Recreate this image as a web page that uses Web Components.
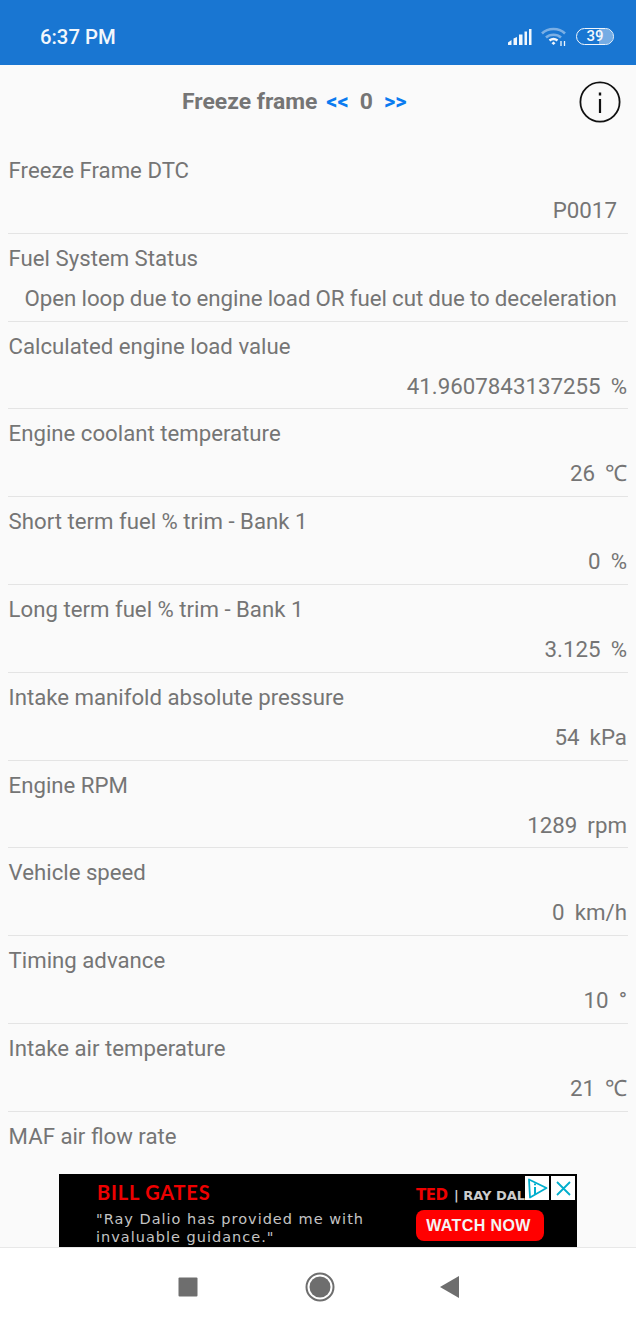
<!DOCTYPE html>
<html>
<head>
<meta charset="utf-8">
<title>Freeze frame</title>
<style>
  html, body { margin: 0; padding: 0; }
  body {
    width: 636px;
    height: 1324px;
    overflow: hidden;
    display: flex;
    flex-direction: column;
    background: #fafafa;
    font-family: Roboto, "Liberation Sans", sans-serif;
  }
  pid-list { flex: 1; min-height: 0; }
</style>
</head>
<body>
<status-bar></status-bar>
<freeze-header></freeze-header>
<pid-list>
  <pid-row label="Freeze Frame DTC" value="P0017  "></pid-row>
  <pid-row label="Fuel System Status" value="Open loop due to engine load OR fuel cut due to deceleration  "></pid-row>
  <pid-row label="Calculated engine load value" value="41.9607843137255  %"></pid-row>
  <pid-row label="Engine coolant temperature" value="26  ℃"></pid-row>
  <pid-row label="Short term fuel % trim - Bank 1" value="0  %"></pid-row>
  <pid-row label="Long term fuel % trim - Bank 1" value="3.125  %"></pid-row>
  <pid-row label="Intake manifold absolute pressure" value="54  kPa"></pid-row>
  <pid-row label="Engine RPM" value="1289  rpm"></pid-row>
  <pid-row label="Vehicle speed" value="0  km/h"></pid-row>
  <pid-row label="Timing advance" value="10  °"></pid-row>
  <pid-row label="Intake air temperature" value="21  ℃"></pid-row>
  <pid-row label="MAF air flow rate" value=""></pid-row>
</pid-list>
<ad-banner></ad-banner>
<nav-bar></nav-bar>

<script>
class StatusBar extends HTMLElement {
    constructor() {
        super();
        this.attachShadow({ mode: 'open' });
        this.shadowRoot.innerHTML = `
            <style>
                :host {
                    display: flex;
                    flex: none;
                    align-items: center;
                    height: 65px;
                    padding: 8px 22px 0 40px;
                    box-sizing: border-box;
                    background: #1976d2;
                    color: #f2f7fc;
                }
                .time { font-size: 20.3px; font-weight: 500; flex: 1; }
                .icons { display: flex; align-items: center; gap: 9px; }
                svg { display: block; }
                .batt {
                    position: relative;
                    width: 38px;
                    height: 17px;
                    margin-top: -1px;
                    box-sizing: border-box;
                    border: 1.5px solid #f2f7fc;
                    border-radius: 9px;
                    overflow: hidden;
                    font-size: 15px;
                    font-weight: 500;
                    line-height: 14px;
                    text-align: center;
                }
                .batt i {
                    position: absolute;
                    top: 0; bottom: 0;
                    left: 22px;
                    width: 14px;
                    background: rgba(255,255,255,.4);
                }
                .batt span { position: relative; }
            </style>
            <span class="time">6:37 PM</span>
            <div class="icons">
                <svg width="24" height="18" viewBox="0 0 24 18" fill="#f2f7fc">
                    <path d="M0 17v-2.5L3.5 12v5zM5.5 17v-6.5L9 9v8zM11 17V6.5h3.5V17zM16.5 17V3.5H19V17zM21 17V1h2.5v16z"/>
                </svg>
                <svg width="26" height="20" viewBox="0 0 26 20" fill="none" stroke-linecap="butt">
                    <path d="M1 6.5C7 .5 18 .5 24 6.5" stroke="#f2f7fc" stroke-opacity=".45" stroke-width="2.6"/>
                    <path d="M5 10.5C9 6.8 16 6.8 20 10.5" stroke="#f2f7fc" stroke-opacity=".45" stroke-width="2.6"/>
                    <path d="M8.5 13.5c2.5-2 5.5-2 8 0" stroke="#f2f7fc" stroke-width="2.4"/>
                    <path d="M10.5 16.2l2-1.6 2 1.6-2 1.8z" fill="#f2f7fc"/>
                    <path d="M20 19v-5M23.5 19v-5" stroke="#f2f7fc" stroke-width="1.3"/>
                </svg>
                <div class="batt"><i></i><span>39</span></div>
            </div>
        `;
    }
}

class FreezeHeader extends HTMLElement {
    constructor() {
        super();
        this.attachShadow({ mode: 'open' });
        this.shadowRoot.innerHTML = `
            <style>
                :host {
                    display: flex;
                    flex: none;
                    align-items: center;
                    height: 73px;
                    padding-left: 182px;
                    padding-right: 15px;
                    box-sizing: border-box;
                    color: #757575;
                    font-size: 22.9px;
                    font-weight: 700;
                }
                .title { margin-right: 9px; }
                .arrow { color: #0a7bf0; font-size: 22px; }
                .num { margin: 0 11px; }
                .info {
                    margin-left: auto;
                    width: 42px;
                    height: 42px;
                }
                svg { display: block; }
            </style>
            <span class="title">Freeze frame</span>
            <span class="arrow">&lt;&lt;</span>
            <span class="num">0</span>
            <span class="arrow">&gt;&gt;</span>
            <svg class="info" viewBox="0 0 42 42" fill="none" stroke="#111">
                <circle cx="21" cy="21" r="19.6" stroke-width="1.8"/>
                <path d="M21 18v14" stroke-width="2.2"/>
                <path d="M21 11.5v3" stroke-width="2.4"/>
            </svg>
        `;
    }
}

class PidList extends HTMLElement {
    constructor() {
        super();
        this.attachShadow({ mode: 'open' });
        this.shadowRoot.innerHTML = `
            <style>
                :host {
                    display: block;
                    overflow: hidden;
                    padding: 8px 8px 0 8px;
                }
            </style>
            <slot></slot>
        `;
    }
}

class PidRow extends HTMLElement {
    constructor() {
        super();
        this.attachShadow({ mode: 'open' });
        this.shadowRoot.innerHTML = `
            <style>
                :host {
                    display: block;
                    height: 87.8px;
                    box-sizing: border-box;
                    padding: 6px 1px 0 .6px;
                    border-bottom: 1px solid #e4e4e4;
                    color: #757575;
                    font-size: 22.2px;
                }
                .label { height: 40px; line-height: 36px; white-space: pre; }
                .value { font-size: 22.3px; text-align: right; line-height: 36px; white-space: pre; word-spacing: -.5px; }
            </style>
            <div class="label"></div>
            <div class="value"></div>
        `;
    }

    connectedCallback() {
        this.shadowRoot.querySelector('.label').textContent = this.getAttribute('label');
        this.shadowRoot.querySelector('.value').textContent = this.getAttribute('value');
    }
}

class AdBanner extends HTMLElement {
    constructor() {
        super();
        this.attachShadow({ mode: 'open' });
        this.shadowRoot.innerHTML = `
            <style>
                :host {
                    display: block;
                    flex: none;
                    background: #fafafa;
                    padding: 0 59px;
                }
                .ad {
                    position: relative;
                    display: flex;
                    height: 73px;
                    background: #000;
                    overflow: hidden;
                    font-family: Lato, "Liberation Sans", sans-serif;
                }
                .left { flex: 1; padding: 7px 0 0 37px; }
                .name {
                    color: #ee0000;
                    font-size: 20px;
                    font-weight: 700;
                    letter-spacing: .8px;
                    line-height: 22px;
                    padding-left: 1px;
                }
                .quote {
                    margin-top: 7px;
                    color: #c4c4c4;
                    font-family: "DejaVu Sans", sans-serif;
                    font-size: 14.5px;
                    letter-spacing: 1px;
                    line-height: 18px;
                    white-space: pre;
                }
                .right { width: 161px; padding-top: 13px; flex: none; }
                .brand {
                    font-family: "DejaVu Sans", sans-serif;
                    font-size: 13px;
                    font-weight: 700;
                    color: #ccc;
                    white-space: pre;
                    line-height: 16px;
                }
                .brand b { color: #e00; font-size: 15px; letter-spacing: -.5px; margin-right: 2px; }
                .watch {
                    width: 128px;
                    height: 31px;
                    margin-top: 6px;
                    padding-right: 3px;
                    box-sizing: border-box;
                    border-radius: 8px;
                    background: #f00;
                    color: #f4f4f4;
                    font-family: "Liberation Sans", sans-serif;
                    font-size: 16px;
                    font-weight: 700;
                    line-height: 31px;
                    text-align: center;
                    letter-spacing: .4px;
                }
                .adchoice {
                    position: absolute;
                    top: 2px;
                    right: 2px;
                    display: flex;
                    gap: 2px;
                }
                .adchoice svg { display: block; background: #fff; }
            </style>
            <div class="ad">
                <div class="left">
                    <div class="name">BILL GATES</div>
                    <div class="quote">"Ray Dalio has provided me with
invaluable guidance."</div>
                </div>
                <div class="right">
                    <div class="brand"><b>TED</b> | RAY DALIO</div>
                    <div class="watch">WATCH NOW</div>
                </div>
                <div class="adchoice">
                    <svg width="24" height="24" viewBox="0 0 24 24" fill="none" stroke="#00aecd" stroke-width="1.8">
                        <path d="M4 3.5L21.5 12 5 21.5z" stroke-linejoin="round"/>
                        <path d="M10 11v7M10 7.5v1.8" stroke-width="2"/>
                    </svg>
                    <svg width="24" height="24" viewBox="0 0 24 24" fill="none" stroke="#00aecd" stroke-width="1.8">
                        <path d="M6 6l13 13M19 6L6 19"/>
                    </svg>
                </div>
            </div>
        `;
    }
}

class NavBar extends HTMLElement {
    constructor() {
        super();
        this.attachShadow({ mode: 'open' });
        this.shadowRoot.innerHTML = `
            <style>
                :host {
                    display: flex;
                    flex: none;
                    align-items: center;
                    height: 77px;
                    box-sizing: border-box;
                    padding: 2px 0 0 178px;
                    background: #fff;
                    border-top: 1px solid #e8e8e8;
                }
                svg { display: block; }
                .home { margin: 0 105px 0 107px; }
            </style>
            <svg width="20" height="20" viewBox="0 0 20 20"><rect x=".5" y=".5" width="19" height="19" rx="1" fill="#6e6e6e"/></svg>
            <svg class="home" width="30" height="30" viewBox="0 0 30 30">
                <circle cx="15" cy="15" r="13.5" fill="none" stroke="#6e6e6e" stroke-width="2"/>
                <circle cx="15" cy="15" r="10.5" fill="#6e6e6e"/>
            </svg>
            <svg width="20" height="22" viewBox="0 0 20 22"><path d="M19 0v22L0 11z" fill="#6e6e6e"/></svg>
        `;
    }
}

customElements.define('status-bar', StatusBar);
customElements.define('freeze-header', FreezeHeader);
customElements.define('pid-list', PidList);
customElements.define('pid-row', PidRow);
customElements.define('ad-banner', AdBanner);
customElements.define('nav-bar', NavBar);
</script>
</body>
</html>
